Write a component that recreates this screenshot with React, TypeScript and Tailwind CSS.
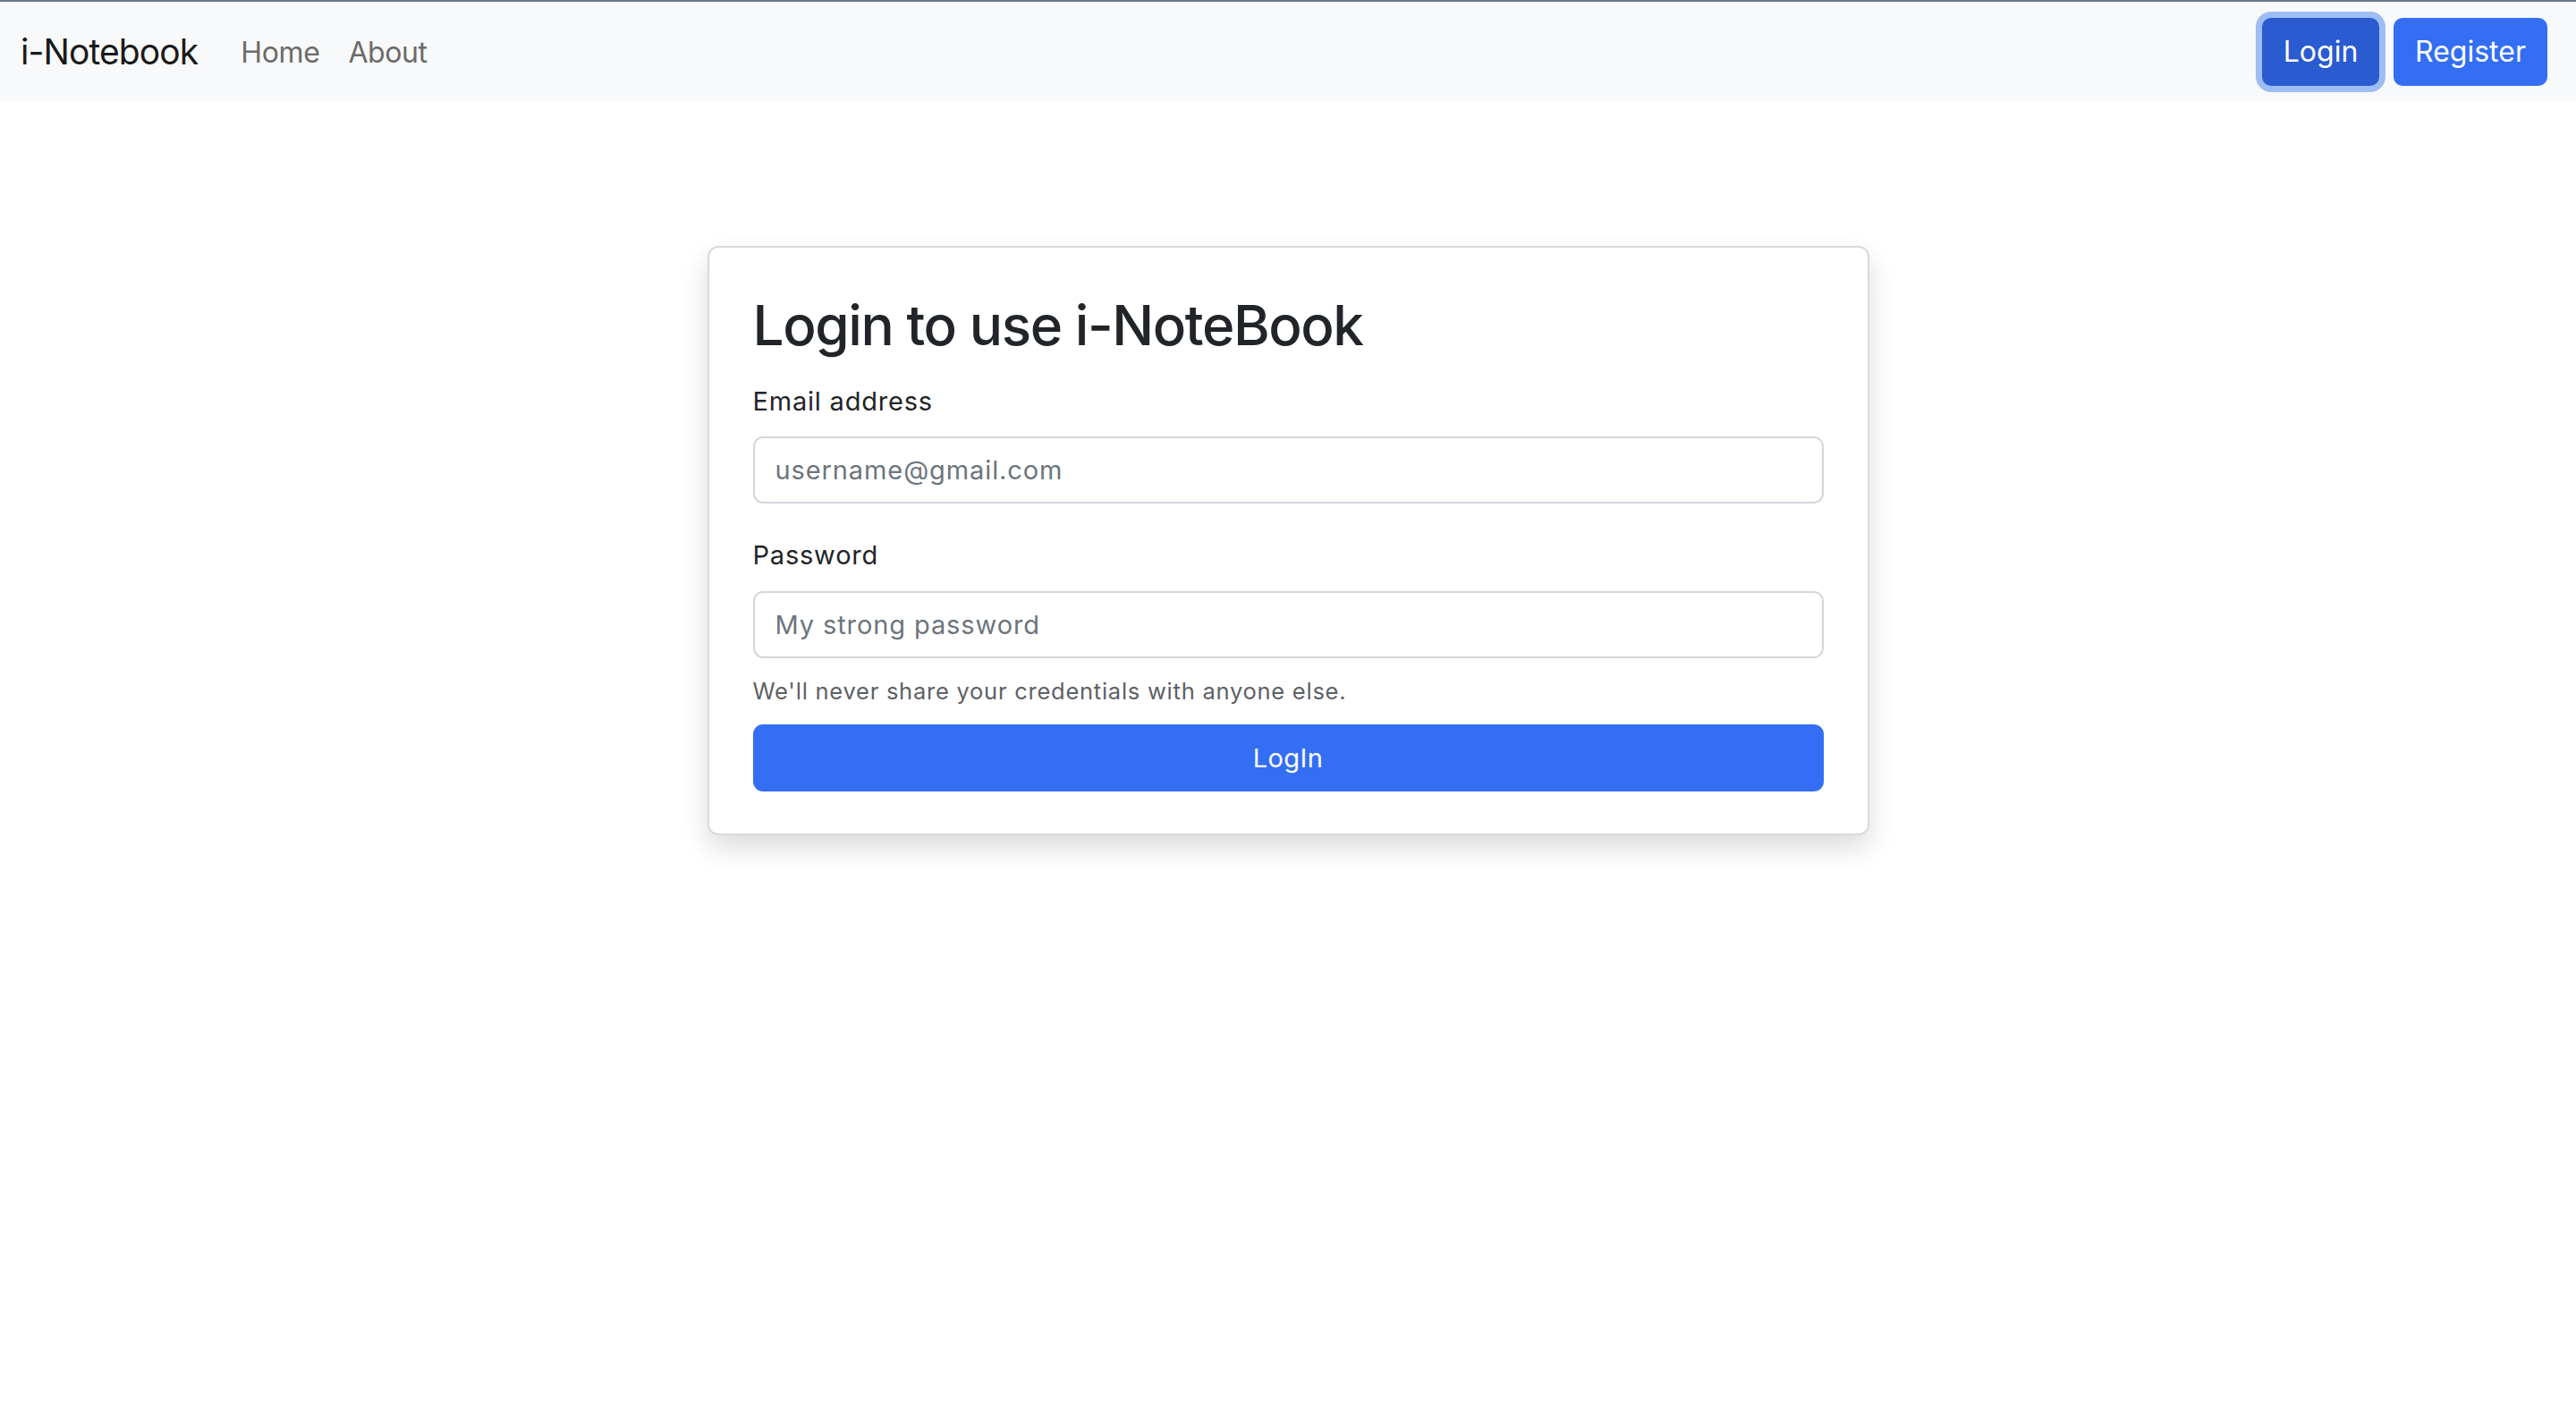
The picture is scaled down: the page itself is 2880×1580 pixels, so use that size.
import { useState } from "react";

const Navbar = () => {
  return (
    <nav className="flex items-center justify-between h-[113px] border-t-2 border-[#6c7590] bg-[#f8f9fa] pl-[23px] pr-[32px]">
      <div className="flex items-center pt-[2px]">
        <a href="#" className="text-[39px] text-[#1a1a1a] tracking-[-0.9px]">
          i-Notebook
        </a>
        <div className="flex items-center gap-[32px] ml-[48px]">
          <a href="#" className="text-[32px] text-[#6b6b6b] tracking-[-0.4px]">
            Home
          </a>
          <a href="#" className="text-[32px] text-[#6b6b6b] tracking-[-0.4px]">
            About
          </a>
        </div>
      </div>

      {/* auth buttons */}
      <div className="flex items-center gap-[16px]">
        <button className="w-[131px] h-[76px] rounded-[10px] bg-[#2a5bd0] text-white text-[32px] ring-[7px] ring-[#9fbdf5]">
          Login
        </button>
        <button className="w-[172px] h-[76px] rounded-[10px] bg-[#336ef5] text-white text-[32px]">
          Register
        </button>
      </div>
    </nav>
  );
};

const LoginCard = () => {
  const [email, setEmail] = useState("");
  const [password, setPassword] = useState("");

  return (
    <div className="w-[1299px] mx-auto mt-[162px] bg-white border-2 border-[#dadada] rounded-[12px] shadow-[0_14px_30px_rgba(0,0,0,0.14)] pt-[50px] px-[49px] pb-[47px]">
      <h1 className="text-[62px] leading-[74px] text-[#212529] font-medium tracking-[-1.4px]">
        Login to use i-NoteBook
      </h1>

      <form className="mt-[26px]" onSubmit={(e) => e.preventDefault()}>
        {/* Email */}
        <label htmlFor="email" className="block text-[29px] leading-[44px] text-[#212529] tracking-[0.8px]">
          Email address
        </label>
        <input
          id="email"
          type="email"
          value={email}
          onChange={(e) => setEmail(e.target.value)}
          placeholder="username@gmail.com"
          className="block w-full h-[75px] mt-[17px] border-2 border-[#d3d7dc] rounded-[11px] px-[23px] text-[29px] tracking-[0.9px] text-[#212529] placeholder:text-[#6c757d] outline-none"
        />

        {/* Password */}
        <label htmlFor="password" className="block mt-[36px] text-[29px] leading-[44px] text-[#212529] tracking-[0.8px]">
          Password
        </label>
        <input
          id="password"
          type="password"
          value={password}
          onChange={(e) => setPassword(e.target.value)}
          placeholder="My strong password"
          className="block w-full h-[75px] mt-[18px] border-2 border-[#d3d7dc] rounded-[11px] px-[23px] text-[29px] tracking-[0.9px] text-[#212529] placeholder:text-[#6c757d] outline-none"
        />
        <p className="mt-[17px] text-[25.5px] leading-[39px] text-[#5c6166] tracking-[0.75px]">
          We'll never share your credentials with anyone else.
        </p>

        <button
          type="submit"
          className="block w-full h-[75px] mt-[18px] rounded-[11px] bg-[#336ef5] text-white text-[29px] tracking-[0.4px]"
        >
          LogIn
        </button>
      </form>
    </div>
  );
};

export default function App() {
  return (
    <div className="min-h-screen bg-white font-['Inter','Noto_Sans',sans-serif]">
      <Navbar />
      <LoginCard />
    </div>
  );
}
